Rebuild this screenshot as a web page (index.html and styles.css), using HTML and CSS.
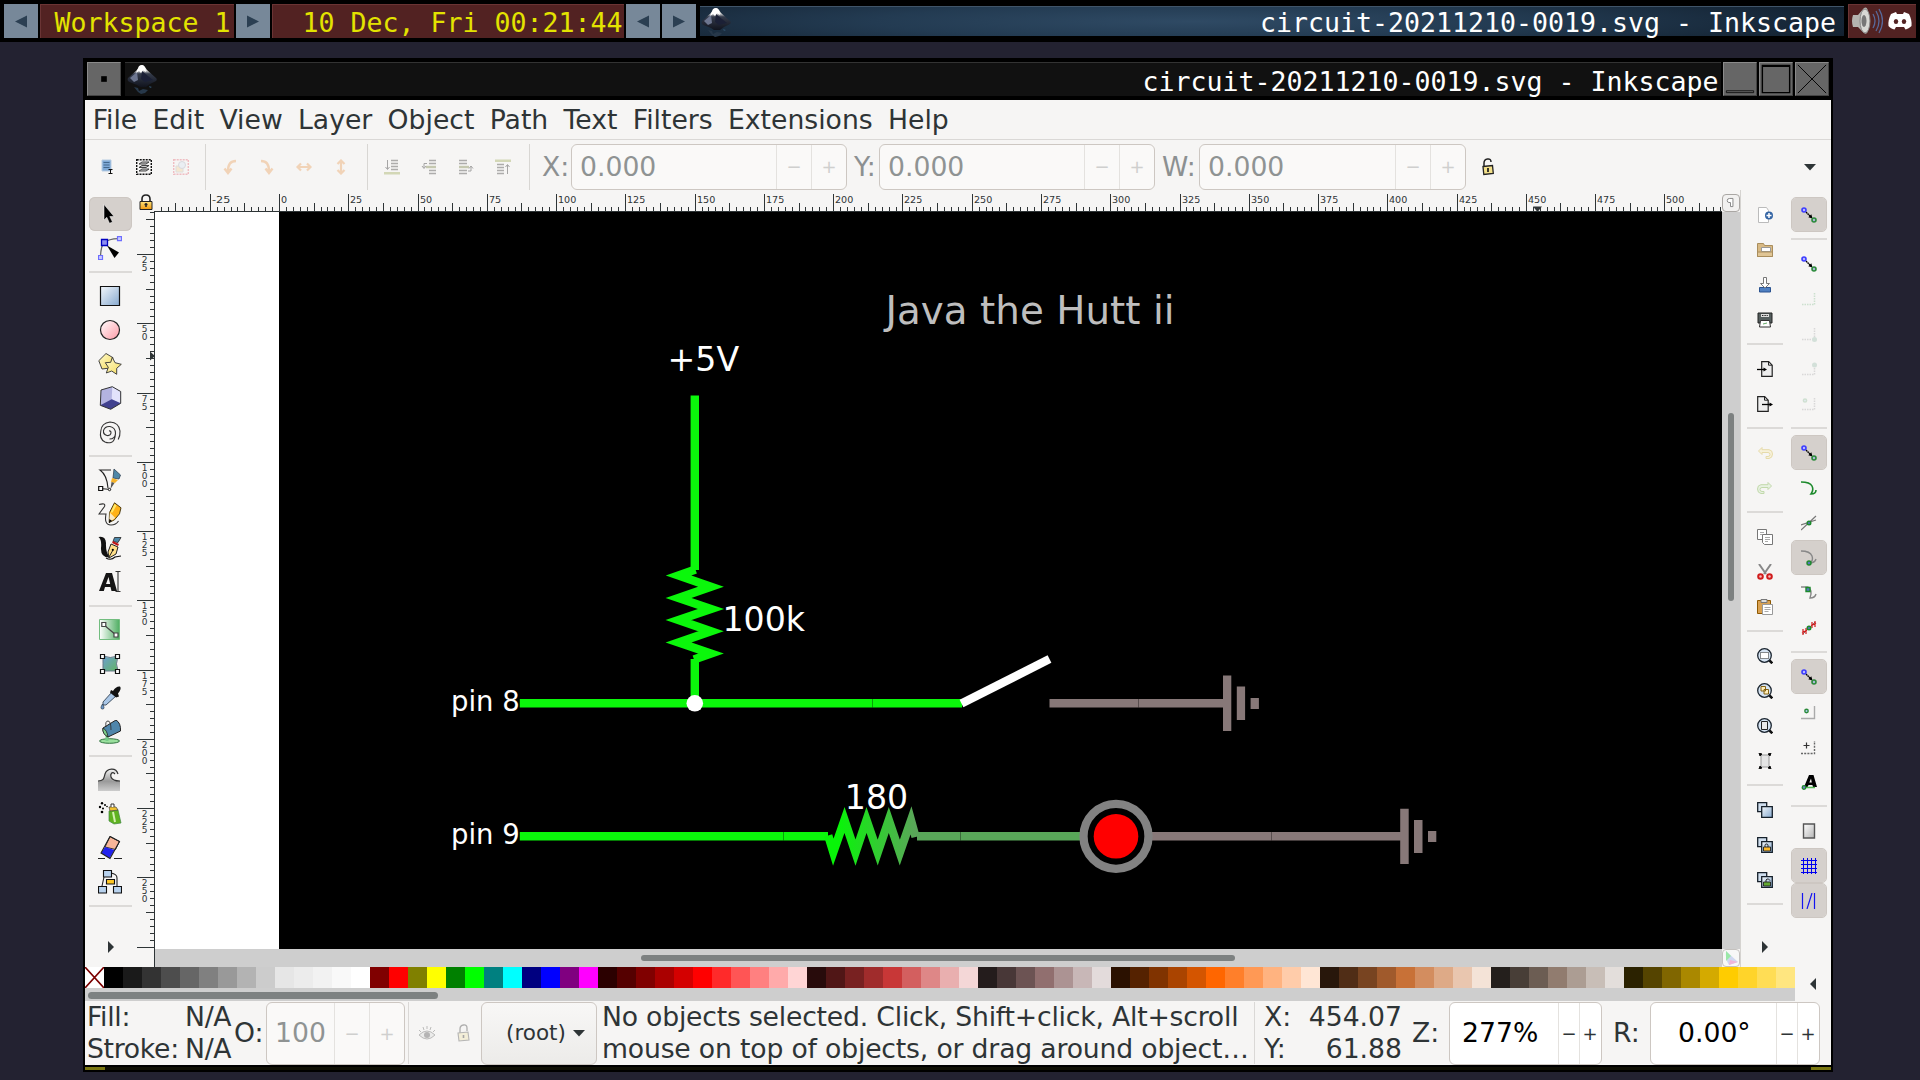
FILE: index.html
```html
<!DOCTYPE html>
<html lang="en">
<head>
<meta charset="utf-8">
<title>circuit-20211210-0019.svg - Inkscape</title>
<link rel="stylesheet" href="styles.css">
</head>
<body>
<svg width="0" height="0" class="defs" aria-hidden="true">
  <defs>
    <linearGradient id="gBlue" x1="0" y1="0" x2="1" y2="1"><stop offset="0" stop-color="#f4f8fc"/><stop offset="1" stop-color="#86a9cf"/></linearGradient>
    <linearGradient id="gPink" x1="0" y1="0" x2="1" y2="1"><stop offset="0" stop-color="#fff"/><stop offset="1" stop-color="#ff9aa6"/></linearGradient>
    <linearGradient id="gYel" x1="0" y1="0" x2="1" y2="1"><stop offset="0" stop-color="#fffbd0"/><stop offset="1" stop-color="#f5dc5c"/></linearGradient>
    <linearGradient id="gGreen" x1="0" y1="0" x2="1" y2="0"><stop offset="0" stop-color="#fff"/><stop offset="1" stop-color="#4fae62"/></linearGradient>
    <linearGradient id="gGray" x1="0" y1="0" x2="1" y2="1"><stop offset="0" stop-color="#fff"/><stop offset="1" stop-color="#b4b4b4"/></linearGradient>
    <linearGradient id="gWave" x1="0" y1="0" x2="0" y2="1"><stop offset="0" stop-color="#f4f4f4"/><stop offset=".55" stop-color="#999"/><stop offset="1" stop-color="#ccc"/></linearGradient>
    <linearGradient id="gMesh" x1="0" y1="0" x2="1" y2="1"><stop offset="0" stop-color="#6c9fd0"/><stop offset="1" stop-color="#62b562"/></linearGradient>
    <linearGradient id="gGold" x1="0" y1="0" x2="0" y2="1"><stop offset="0" stop-color="#ffe27a"/><stop offset="1" stop-color="#f09a10"/></linearGradient>
    <linearGradient id="gInk" x1="0" y1="0" x2="0" y2="1"><stop offset="0" stop-color="#fff"/><stop offset=".25" stop-color="#ddd"/><stop offset=".4" stop-color="#333a4a"/><stop offset="1" stop-color="#11141e"/></linearGradient>
    <symbol id="inkscape" viewBox="0 0 30 30">
      <path d="M15 1c-2 0-3 2-5 5L1 14c-1 2 0 4 4 5l5 2 3 2h6l4-3 6-3c1-1 1-2 0-3L20 6c-2-3-3-5-5-5z" fill="url(#gInk)"/>
      <path d="M15 7l6 5 5 4-8 2-4-3z" fill="#1b2036"/><path d="M3 14l7-6 1 8-4 2z" fill="#6d7690"/><path d="M12 2q3-2 6 1l1 5-3-2-2 3-2-2-3 2z" fill="#fff"/><path d="M7 23l4 1 1 3 4-2 5 1-3 3-4 1-3-2z" fill="#27384a"/><path d="M22 22l3 1-2 1z" fill="#31506b"/>
    </symbol>
    <symbol id="snap" viewBox="0 0 16 16">
      <path d="M5 5l5 5" stroke="#000" stroke-width="1.4" stroke-dasharray="1.6 .6"/><path d="M11.5 11.5l-4.2-1.2 3-3z"/>
      <circle cx="3" cy="3" r="2" fill="#b9bbff" stroke="#3c3cff" stroke-width="1.6"/><circle cx="13" cy="13" r="2" fill="#a9b9d8" stroke="#2b8a3a" stroke-width="1.6"/>
    </symbol>
    <symbol id="lens" viewBox="0 0 16 16"><path d="M12 12l3.300 3.300" stroke="#111" stroke-width="2.600"/><circle cx="7.500" cy="7.500" r="6.800" fill="#d5e3f2" stroke="#1b2530" stroke-width="1.300"/></symbol>
    <symbol id="dups" viewBox="0 0 16 16"><path d="M.7.7h9v9h-9z" fill="#cfdeee" stroke="#16202a" stroke-width="1.3"/><path d="M4.7 4.7h10.6v10.6H4.7z" fill="url(#gBlue)" stroke="#16202a" stroke-width="1.3"/></symbol>
  </defs>
</svg>

<header class="panel">
  <button class="pbtn left"><svg viewBox="0 0 34 34"><path d="M23 11.500v12L11 17.500z"/></svg></button>
  <div class="ws">Workspace 1</div>
  <button class="pbtn"><svg viewBox="0 0 34 34"><path d="M11 11.500v12L23 17.500z"/></svg></button>
  <div class="clock">10 Dec, Fri 00:21:44</div>
  <button class="pbtn"><svg viewBox="0 0 34 34"><path d="M23 11.500v12L11 17.500z"/></svg></button>
  <button class="pbtn"><svg viewBox="0 0 34 34"><path d="M11 11.500v12L23 17.500z"/></svg></button>
  <div class="task"><svg class="tico"><use href="#inkscape"/></svg><span>circuit-20211210-0019.svg - Inkscape</span></div>
  <div class="tray">
    <svg width="32" height="30" viewBox="0 0 32 30"><path d="M2 9h5l6-7q3-2 4 3 2 10 0 20-1 4-4 2l-6-6H2q-2-6 0-12z" fill="#b4b4b0"/><ellipse cx="14" cy="15" rx="5" ry="12" fill="#d8d8d4" stroke="#888" stroke-width="1"/><ellipse cx="13" cy="15" rx="2.500" ry="6" fill="#777"/><path d="M22 8q4 7 0 14M25 5q6 10 0 20M28 3q7 12 0 24" fill="none" stroke="#58699b" stroke-width="1.300"/></svg>
    <svg width="24" height="20" viewBox="0 0 24 20"><path d="M8 1l1 2h6l1-2 5 2c2 4 3 8 2.500 12-2 2-4 3-6 3.500L16 16H8l-1.500 2.500C4 18 2 17 .5 15 0 11 1 7 3 3z" fill="#fff"/><ellipse cx="8" cy="10.500" rx="2.200" ry="2.500" fill="#522222"/><ellipse cx="16" cy="10.500" rx="2.200" ry="2.500" fill="#522222"/></svg>
  </div>
</header>

<main class="window">
  <div class="titlebar">
    <button class="wbtn"><svg viewBox="0 0 34 34"><path d="M14 14h6v6h-6z" fill="#000"/></svg></button>
    <div class="title"><svg class="tico"><use href="#inkscape"/></svg><span>circuit-20211210-0019.svg - Inkscape</span></div>
    <button class="wbtn"><svg viewBox="0 0 34 34"><path d="M2.500 29.500h29v2h-29z" fill="none" stroke="#111"/></svg></button>
    <button class="wbtn"><svg viewBox="0 0 34 34"><path d="M2.500 2.500h29v29h-29zM2.500 3.500h29" fill="none" stroke="#000" stroke-width="1.500"/></svg></button>
    <button class="wbtn"><svg viewBox="0 0 34 34"><path d="M2 2l30 30M32 2L2 32" fill="none" stroke="#000"/></svg></button>
  </div>

  <nav class="menu"><span>File</span><span>Edit</span><span>View</span><span>Layer</span><span>Object</span><span>Path</span><span>Text</span><span>Filters</span><span>Extensions</span><span>Help</span></nav>

  <section class="options">
    <div class="grp g1">
      <svg class="i16" viewBox="0 0 16 16"><path d="M3 1h9v11H3z" fill="#7fa9d6" stroke="#b9cde2"/><path d="M4.500 3.500h6M4.500 6h6M4.500 8.500h6" stroke="#44698f"/><path d="M9.500 10.500h4M11.500 10.500v4M9.500 14.500h4" stroke="#111"/></svg>
      <svg class="i16" viewBox="0 0 16 16"><path d="M.7.7h14.600v14.600H.7z" fill="none" stroke="#111" stroke-width="1.400" stroke-dasharray="2 1"/><path d="M3 5l3-2h7l-3 2zM3 8.500l3-2h7l-3 2zM3 12l3-2h7l-3 2z" fill="#ccc" stroke="#333" stroke-width=".9"/></svg>
      <svg class="i16 dim" viewBox="0 0 16 16"><path d="M.7.7h14.600v14.600H.7z" fill="none" stroke="#e04050" stroke-width="1.400" stroke-dasharray="2 1"/><path d="M3 7h7v6H3z" fill="#f3c97e" stroke="#aaa"/><circle cx="9" cy="6" r="3.500" fill="#cfe0f0" stroke="#99a"/></svg>
    </div>
    <i class="vsep"></i>
    <div class="grp g2">
      <svg class="i16 dim" viewBox="0 0 16 16"><path d="M14 2Q6 2 6 12M2.500 9.500L6 14l3.500-4.500" fill="none" stroke="#e8862f" stroke-width="2.400"/></svg>
      <svg class="i16 dim" viewBox="0 0 16 16"><path d="M2 2Q10 2 10 12M6.500 9.500L10 14l3.500-4.500" fill="none" stroke="#e8862f" stroke-width="2.400"/></svg>
      <svg class="i16 dim" viewBox="0 0 16 16"><path d="M2 8h12M5 4.500L1.500 8 5 11.500M11 4.500L14.500 8 11 11.500" fill="none" stroke="#e8862f" stroke-width="2.200"/></svg>
      <svg class="i16 dim" viewBox="0 0 16 16"><path d="M8 2v12M4.500 5L8 1.500 11.500 5M4.500 11L8 14.500l3.500-3.500" fill="none" stroke="#e8862f" stroke-width="2.200"/></svg>
    </div>
    <i class="vsep"></i>
    <div class="grp g2">
      <svg class="i16 dim2" viewBox="0 0 16 16"><path d="M7 1.500h7M7 4.500h7M7 7.500h7M7 10.500h7" stroke="#555" stroke-width="1.700"/><path d="M3.500 1v9M1.500 8l2 2.500 2-2.500" stroke="#444" fill="none"/><path d="M0 13h16v2.500H0z" fill="#aab36c"/></svg>
      <svg class="i16 dim2" viewBox="0 0 16 16"><path d="M8 1.500h7M8 4.500h7M8 11.500h7M8 14.500h7" stroke="#555" stroke-width="1.700"/><path d="M5 8h10" stroke="#8a9260" stroke-width="2.400"/><path d="M6 4.500H3V9M1 7l2 2.500L5 7" stroke="#444" fill="none"/></svg>
      <svg class="i16 dim2" viewBox="0 0 16 16"><path d="M1 1.500h8M1 4.500h8M1 11.500h8M1 14.500h8" stroke="#555" stroke-width="1.700"/><path d="M1 8h10" stroke="#8a9260" stroke-width="2.400"/><path d="M10 12h3V7.500M11 9.500L13 7l2 2.500" stroke="#444" fill="none"/></svg>
      <svg class="i16 dim2" viewBox="0 0 16 16"><path d="M0 .5h16V3H0z" fill="#aab36c"/><path d="M2 5.500h7M2 8.500h7M2 11.500h7M2 14.500h7" stroke="#555" stroke-width="1.700"/><path d="M12.500 6v9M10.500 8l2-2.500 2 2.500" stroke="#444" fill="none"/></svg>
    </div>
    <i class="vsep"></i>
    <label class="lx">X:</label><div class="spin"><span>0.000</span><b>−</b><b>+</b></div>
    <label class="ly">Y:</label><div class="spin"><span>0.000</span><b>−</b><b>+</b></div>
    <label class="lw">W:</label><div class="spin sw"><span>0.000</span><b>−</b><b>+</b></div>
    <svg class="lockw" viewBox="0 0 16 18"><path d="M4 9V5q0-3.500 3.500-4T11 4" fill="none" stroke="#222" stroke-width="1.500"/><path d="M3 8.500l9.500-1 .8 8-9.500 1z" fill="#f3e08a" stroke="#222" stroke-width="1.300"/><path d="M8 10v4" stroke="#222" stroke-width="1.800"/></svg>
    <svg class="drop" viewBox="0 0 12 7"><path d="M0 0h12L6 6.500z"/></svg>
  </section>

  <section class="work">
    <aside class="toolbox">
      <div class="tb on"><svg viewBox="0 0 24 24"><path d="M6 2.500V18l2.800-2.700 2.700 6 3-1.300-2.700-5.500H16z" fill="#000" stroke="#fff" stroke-width=".5"/></svg></div>
      <div class="tb"><svg viewBox="0 0 24 24"><path d="M2.500 20Q3 10 6 6.500 11 3 20 2.700" fill="none" stroke="#666" stroke-width="1.300"/><path d="M.5 19.500h4v4h-4zM19.500.700h4v4h-4z" fill="#c9cbff" stroke="#6d6dff" stroke-width="1.200"/><path d="M3.500 3.500h6v6h-6z" fill="#8e8ef0" stroke="#0000c0" stroke-width="1.300"/><path d="M9 9.500l12 7-4.500 5.500z"/></svg></div>
      <hr>
      <div class="tb"><svg viewBox="0 0 24 24"><path d="M2.500 2.500h19v19h-19z" fill="url(#gBlue)" stroke="#111" stroke-width="1.200"/></svg></div>
      <div class="tb"><svg viewBox="0 0 24 24"><circle cx="12" cy="12" r="9.500" fill="url(#gPink)" stroke="#222" stroke-width="1.200"/></svg></div>
      <div class="tb"><svg viewBox="0 0 24 24"><g fill="url(#gYel)" stroke="#333" stroke-width=".9"><path d="M8 1.500l7 4.200L12 16l-8 1L.8 8.700z"/><path d="M14.300 5.300l2.700 5.400 6.300 1.600-4.600 4v6l-5-3.300-5.400 2 2-5.700-3-4.600 5.400-.4z"/></g></svg></div>
      <div class="tb"><svg viewBox="0 0 24 24"><path d="M14.300.700l8.400 4.800v11.800l-10 6L2.300 19.300 3 4z" fill="#b3b3e0"/><path d="M14.300.700l8.400 4.800v11.800l-9-4z" fill="#e2e2fb"/><path d="M2.300 19.300l11.400-6 9 4-10 6z" fill="#41418f"/><path d="M14.300.700l8.400 4.800v11.800l-10 6L2.300 19.300 3 4z" fill="none" stroke="#333" stroke-width="1"/></svg></div>
      <div class="tb"><svg viewBox="0 0 24 24"><path d="M11 11q2-.5 2 2-.5 3-4 2.500-4-1-3.500-5Q7 6 12 6.500q5.500 1 5.500 7Q17 19 11.500 19M2.800 11Q3.500 3 12 2q9 .5 10 9 .3 5-1.800 8.500M2.800 11Q1 19 7 22q3 1.300 6 .5 4-1 4.500-9" fill="none" stroke="#333" stroke-width="1.100"/></svg></div>
      <hr>
      <div class="tb"><svg viewBox="0 0 24 24"><path d="M13 2H2q7 5 8 18M2 20.500l11 1" fill="none" stroke="#222" stroke-width="1.100"/><path d="M.700 18.500h4v4h-4z" fill="#fff" stroke="#111" stroke-width="1.200"/><circle cx="11.500" cy="21.500" r="1.200" fill="#fff" stroke="#111"/><path d="M16 1l6.500 6-1.500 4-6-1z" fill="#4d87a8" stroke="#345" stroke-width=".8"/><path d="M14 10l6 2-3 3-4-1z" fill="#f5b32a"/><path d="M13.500 14l3 1-4 6z" fill="#555"/></svg></div>
      <div class="tb"><svg viewBox="0 0 24 24"><path d="M1 2.500q7-2 5.500 2L1 12h7c-1 5-1 11 5 11q5 0 7.500-4" fill="none" stroke="#333" stroke-width="1.100"/><path d="M16.500.800l6.500 5-1.500 6-5 6-5.300 2.700.300-10z" fill="#ffb217" stroke="#3b2c05" stroke-width=".9"/><path d="M16.500 2l2 1.500-4 7-2 0z" fill="#ffe96a"/><path d="M11.800 10.500l5.500 5.500-6 4.300z" fill="#fbe9c2"/><path d="M11.300 17l2.700 1.700-3 2.300z"/></svg></div>
      <div class="tb"><svg viewBox="0 0 24 24"><path d="M.5 1q7-1.500 7.500 6-.500 10 4 14.500Q2.500 22 3 12 4 4 .5 1z" fill="#111"/><path d="M8 22q5 3 9-1l6-1" fill="none" stroke="#111" stroke-width="1.100"/><path d="M16.500 1.500h6.500l-3 5-5-1z" fill="#4d87a8" stroke="#222" stroke-width=".8"/><path d="M14.500 6l6 3" stroke="#c01616" stroke-width="2"/><path d="M13 8l7 3-2 7-7 4-1-6z" fill="#ffe08a" stroke="#222" stroke-width="1"/><path d="M11 21l4-7" stroke="#222"/><circle cx="14.800" cy="13.800" r="1.100"/></svg></div>
      <div class="tb"><svg viewBox="0 0 24 24"><path d="M1 21L8 3h6l5 18h-5.500l-1-4H7l-1.200 4zM8 14h4.200L10.500 7z" fill="#151515"/><path d="M17.500 1.500h5M20 1.500v20M17.500 21.500h5" stroke="#333" stroke-width="1.100"/></svg></div>
      <hr>
      <div class="tb"><svg viewBox="0 0 24 24"><path d="M1.500 1.500h20v20h-20z" fill="url(#gGreen)" stroke="#72bd7f" stroke-width="1"/><path d="M6 7l12 10" stroke="#444" stroke-width="1.200"/><path d="M3.800 4.500h4v4h-4zM16 15h4v4h-4z" fill="#fff" stroke="#444" stroke-width="1.200"/></svg></div>
      <div class="tb"><svg viewBox="0 0 24 24"><path d="M5 4q7 3 15 0-3 8 0 15-8 0-15 0 0-8 0-15z" fill="url(#gMesh)" stroke="#678" stroke-width="1"/><g fill="#fff" stroke="#111" stroke-width="1.200"><path d="M2.500 2.500h4v4h-4zM17.500 2.500h4v4h-4zM2.500 17.500h4v4h-4zM17.500 17.500h4v4h-4z"/></g></svg></div>
      <div class="tb"><svg viewBox="0 0 24 24"><path d="M14 6l4 4L8 19H5v-3z" fill="#a9c6e6" stroke="#345" stroke-width=".9"/><path d="M13 4l2 1q3-5 7-4.500 2 2-2 7l1 3-3 1-6-5z" fill="#111"/><path d="M4.500 18q-3 5 0 5t0-5z" fill="#6f9bd0" stroke="#234" stroke-width=".7"/></svg></div>
      <div class="tb"><svg viewBox="0 0 24 24"><ellipse cx="11.500" cy="21" rx="10" ry="2.300" fill="#9adf9d" stroke="#263" stroke-width=".9"/><path d="M9 15v6" stroke="#7c8" stroke-width="3"/><path d="M5 8L18 0q5 3 4.500 11L10 17Q4 13 5 8z" fill="#4f86ab" stroke="#222" stroke-width="1"/><path d="M5 8q4 2 5 9-6-3-5-9z" fill="#7dce8b" stroke="#222" stroke-width=".8"/><path d="M8 7q-1-6 2-6t3 9" fill="none" stroke="#333" stroke-width=".9"/></svg></div>
      <hr>
      <div class="tb"><svg viewBox="0 0 24 24"><path d="M0 13c6 0 6-3 7-7 2-6 12-7 12 0-2-3-6-1-6 3s3 4 9 4v10H0z" fill="url(#gWave)"/><path d="M0 13c6 0 6-3 7-7 2-6 11-7 13 0M17 6c-3-3-5 0-4 3s4 4 9 4" fill="none" stroke="#333" stroke-width="1.200"/></svg></div>
      <div class="tb"><svg viewBox="0 0 24 24"><path d="M11 9l9-1 3 13-7 1-5-3z" fill="#5fb21f" stroke="#484" stroke-width=".7"/><path d="M15 10l2 10" stroke="#d4f0b0" stroke-width="2"/><path d="M11 5h7l2 3-8 1z" fill="#f2c230" stroke="#444" stroke-width=".7"/><path d="M13 5V2h3v3" fill="#fff" stroke="#333"/><g><circle cx="4" cy="1.200" r="1.200"/><circle cx="2" cy="5" r="1.200"/><circle cx="7" cy="3" r="1"/><circle cx="5" cy="6.500" r="1"/><circle cx="4" cy="10" r="1.300"/><circle cx="9" cy="4.500" r=".8"/></g></svg></div>
      <div class="tb"><svg viewBox="0 0 24 24"><path d="M12 .500l9.500 5-4 8L7 11z" fill="#f7b598" stroke="#333"/><path d="M7 11l9.500 3-5 8.500L3 17z" fill="#2222ee"/><path d="M12 .500l9.500 5-9.500 17L3 17z" fill="none" stroke="#222" stroke-width="1.100"/><path d="M0 22.500h7M16 22.500h8" stroke="#222" stroke-width="1.200"/></svg></div>
      <div class="tb"><svg viewBox="0 0 24 24"><path d="M6 7L4 16M13 3q6 1 6 5v8" fill="none" stroke="#222" stroke-width="1.100"/><g stroke="#111" stroke-width="1.100"><path d="M5.500.500h8v6.500h-8zM.5 16.500h8V23h-8zM15.500 16.500h8V23h-8z" fill="#b8d2ee"/><path d="M8.500 9.500h8V14h-8z" fill="#ffc826"/></g></svg></div>
      <hr>
      <svg class="more" viewBox="0 0 6 12"><path d="M0 0l6 6-6 6z"/></svg>
    </aside>

    <div class="vcol">
      <div class="guide"><svg viewBox="0 0 16 17"><path d="M4 8V5q0-4 4-4t4 4v3" fill="none" stroke="#222" stroke-width="1.600"/><path d="M2 7.500h12v8H2z" fill="url(#gGold)" stroke="#222"/><path d="M8 9v4M6.500 10.500h3" stroke="#222" stroke-width="1.500"/></svg></div>
      <svg class="vruler" id="vruler" width="18" height="756"></svg>
    </div>

    <div class="canvascol">
      <svg class="hruler" id="hruler" width="1567" height="18"></svg>
      <svg class="canvas" width="1567" height="737" viewBox="155 212 1567 737">
        <defs><linearGradient id="gRes" gradientUnits="userSpaceOnUse" x1="838" y1="0" x2="915" y2="0"><stop offset="0" stop-color="#08f508"/><stop offset="1" stop-color="#5aa659"/></linearGradient></defs>
        <rect x="155" y="212" width="124" height="737" fill="#fff"/>
        <rect x="279" y="212" width="1443" height="737"/>
        <g fill="none" stroke="#0bf70b" stroke-width="8.400">
          <path d="M694.800 395.500V570M694.800 659V703M519.800 703.300H962M519.800 836.300H828"/>
          <path d="M695.500 569.500L678.500 575.500 711 586.700 678.500 598 711 609 678.500 620 711 631.200 678.500 642.500 711 653.500 694 659.500" stroke-miterlimit="8"/>
          <path d="M828.200 835.500L833.300 852.200 844.500 820 855.500 852.600 866.500 820 877.700 852.600 888.800 820 899.800 852.600 911 820.300 915.600 837" stroke="url(#gRes)" stroke-miterlimit="8"/>
          <path d="M917 836.300H1083" stroke="#59a659"/>
          <path d="M961.500 703.500L1049.500 659" stroke="#fff"/>
          <path d="M1049.500 703.300H1224M1152 836.300H1401" stroke="#877878"/>
        </g>
        <path d="M872.500 699v8.500M783.500 832v8.500M960.500 832v8.500M1138.500 699v8.500M1271.500 832v8.500" stroke="#000" stroke-opacity=".35"/>
        <path d="M1223 675.500h8.300v55.500h-8.300zM1236.800 686.500h8.300V720h-8.300zM1250.600 698h8.300v11h-8.300zM1400.200 808.800h8.500V864h-8.500zM1414 820h8.500v33H1414zM1428 831h8.300v11H1428z" fill="#877878"/>
        <circle cx="694.800" cy="703.300" r="8.300" fill="#fff"/>
        <circle cx="1116" cy="836.300" r="32.500" fill="#000" stroke="#828282" stroke-width="8.300"/><circle cx="1116" cy="836.300" r="22.300" fill="#f00"/>
        <g fill="#fff" class="label">
          <text x="885.500" y="323.700" font-size="38.800" fill="#bebebe" textLength="289">Java the Hutt ii</text>
          <text x="667.500" y="371" font-size="33.200">+5V</text>
          <text x="722.500" y="631" font-size="33.200">100k</text>
          <text x="844.800" y="809" font-size="33.200">180</text>
          <text x="451" y="710.500" font-size="27.500">pin 8</text>
          <text x="451" y="843.500" font-size="27.500">pin 9</text>
        </g>
      </svg>
      <div class="hscroll"><i></i></div>
    </div>

    <div class="scrollcol">
      <div class="sticky"><svg viewBox="0 0 14 16"><path d="M5 8Q3 8 3 5.500T6 3h4v10H7V8z" fill="#fff" stroke="#888" stroke-width="1.200"/></svg></div>
      <div class="vscroll"><i></i></div>
      <div class="cms"><svg viewBox="0 0 16 16"><path d="M3 1l12 11-9 3q-4-6-3-14z" fill="#cfd8f0"/><path d="M3 1l5 5-5 5z" fill="#9be8a8"/><path d="M15 12l-9 3 1-5z" fill="#f0b6d8"/></svg></div>
    </div>

    <aside class="cmds">
      <div class="cb"><svg viewBox="0 0 16 16"><path d="M1.500.500h8l2 3v12h-10z" fill="#fff" stroke="#bbb"/><circle cx="12" cy="8.500" r="4" fill="#3465a4"/><path d="M9.500 8.500h5M12 6v5" stroke="#fff" stroke-width="1.500"/></svg></div>
      <div class="cb"><svg viewBox="0 0 16 16"><path d="M.500 1.500h6l1 2h8v11h-15z" fill="#d8b984" stroke="#a98d5c"/><path d="M4.500 5.500h9v4h-9z" fill="#fff" stroke="#999"/><path d="M.500 10h15v4.500h-15z" fill="#e0c595" stroke="#a98d5c"/></svg></div>
      <div class="cb"><svg viewBox="0 0 16 16"><path d="M2.500 10.500h11v4.500h-11z" fill="#4f7fc0" stroke="#2b5390"/><path d="M6.500.500h3v6h3L8 11 3.500 6.500h3z" fill="#fff" stroke="#777"/></svg></div>
      <div class="cb"><svg viewBox="0 0 16 16"><path d="M1 1h14v10H1z" fill="#555e5e" stroke="#222"/><path d="M4 2h8v3H4z" fill="#ddd"/><path d="M5 3.500h6" stroke="#222" stroke-dasharray="1 .6"/><path d="M3.500 8.500h9l1 6.500h-11z" fill="#fff" stroke="#333"/><path d="M6 12l4-1" stroke="#6a6"/></svg></div>
      <hr>
      <div class="cb"><svg viewBox="0 0 16 16"><path d="M4.700.700h7l3.500 3.500v11.100H4.700z" fill="#eee" stroke="#222" stroke-width="1.200"/><path d="M11.500.700v3.500h3.500" fill="none" stroke="#222"/><path d="M0 8.500h7" stroke="#000" stroke-width="1.300"/><path d="M10 8.500L6.500 6.500v4z"/></svg></div>
      <div class="cb"><svg viewBox="0 0 16 16"><path d="M.700.700h7l3.500 3.500v11.100H.700z" fill="#eee" stroke="#222" stroke-width="1.200"/><path d="M7.500.700v3.500H11" fill="none" stroke="#222"/><path d="M5 8.500h8" stroke="#000" stroke-width="1.300"/><path d="M16 8.500l-3.500-2v4z"/></svg></div>
      <hr>
      <div class="cb dim"><svg viewBox="0 0 16 16"><path d="M5 2.500L1.500 6 5 9.500V7.500h6q2 0 2 2t-2 2H9v2h3q3.500-.5 3.500-4.500T12 4.700H5z" fill="#fbe9a0" stroke="#c4a000"/></svg></div>
      <div class="cb dim"><svg viewBox="0 0 16 16"><path d="M11 2.500L14.500 6 11 9.500V7.500H5q-2 0-2 2t2 2h2v2H4Q.500 13 .500 9T4 4.700h7z" fill="#c5e8b8" stroke="#4e9a06"/></svg></div>
      <hr>
      <div class="cb"><svg viewBox="0 0 16 16"><g fill="#fff" stroke="#777"><path d="M.500.500h9v10h-9z"/><path d="M5.500 5.500h10v10h-8l-2-2z"/></g><path d="M3 3.500h4M3 5.500h2M8 8.500h5M8 10.500h5M8 12.500h3" stroke="#aaa"/></svg></div>
      <div class="cb"><svg viewBox="0 0 16 16"><path d="M2 0l7 10M14 0L7 10" stroke="#888" stroke-width="2"/><circle cx="3.500" cy="12.500" r="2.300" fill="#f6c0c0" stroke="#d01c1c" stroke-width="2"/><circle cx="12.500" cy="12.500" r="2.300" fill="#f6c0c0" stroke="#d01c1c" stroke-width="2"/></svg></div>
      <div class="cb"><svg viewBox="0 0 16 16"><path d="M.500 1.500h13v13H.500z" fill="#d9a151" stroke="#8f5902"/><path d="M4 .500h6v3H4z" fill="#ddd" stroke="#777"/><path d="M5.500 5.500h10v10h-10z" fill="#fff" stroke="#999"/><path d="M7.500 8.500h6M7.500 10.500h6M7.500 12.500h4" stroke="#aaa"/></svg></div>
      <hr>
      <div class="cb"><svg viewBox="0 0 16 16"><use href="#lens"/><path d="M3.500 4.500h8v6h-8z" fill="#fff" stroke="#222" stroke-dasharray="1 1"/></svg></div>
      <div class="cb"><svg viewBox="0 0 16 16"><use href="#lens"/><path d="M4 3.500h4.500V8H4zM7 6.500h4.500V11H7z" fill="#ffeebb" stroke="#7a5500" stroke-width=".9"/></svg></div>
      <div class="cb"><svg viewBox="0 0 16 16"><use href="#lens"/><path d="M4.500 3.500h6v8h-6z" fill="#e8e8e8" stroke="#222"/></svg></div>
      <div class="cb"><svg viewBox="0 0 16 16"><path d="M4 2h8v12H4z" fill="#e5e5e5" stroke="#999"/><path d="M2 0l3 1-2 2zM14 0l-3 1 2 2zM2 16l3-1-2-2zM14 16l-3-1 2-2z" stroke="#111" stroke-width="1"/></svg></div>
      <hr>
      <div class="cb"><svg viewBox="0 0 16 16"><use href="#dups"/></svg></div>
      <div class="cb"><svg viewBox="0 0 16 16"><use href="#dups"/><path d="M8 10V8.500q0-1.500 1.500-1.500T11 8.500V10" fill="none" stroke="#222"/><path d="M6.500 10h7v4h-7z" fill="#fbb829" stroke="#222" stroke-width=".9"/></svg></div>
      <div class="cb"><svg viewBox="0 0 16 16"><use href="#dups"/><path d="M9 10V8q1-1.500 2.500-.8t1.500 1.300" fill="none" stroke="#222"/><path d="M6.500 10h7v4h-7z" fill="#62a832" stroke="#222" stroke-width=".9"/></svg></div>
      <hr>
      <svg class="more" viewBox="0 0 6 12"><path d="M0 0l6 6-6 6z"/></svg>
    </aside>

    <aside class="snaps">
      <div class="sb on"><svg><use href="#snap"/></svg></div>
      <hr>
      <div class="sb"><svg><use href="#snap"/></svg></div>
      <div class="sb off"><svg viewBox="0 0 16 16"><path d="M1 13.500h12.500V1" fill="none" stroke="#3a9a4c" stroke-width="1.500" stroke-dasharray="1.500 1"/></svg></div>
      <div class="sb off"><svg viewBox="0 0 16 16"><path d="M1 13.500h12.500V1" fill="none" stroke="#777" stroke-width="1.500" stroke-dasharray="1.500 1"/><circle cx="13.500" cy="13.500" r="2.500" fill="#5a9a7c"/></svg></div>
      <div class="sb off"><svg viewBox="0 0 16 16"><path d="M1 13.500h12.500V1" fill="none" stroke="#777" stroke-width="1.500" stroke-dasharray="1.500 1"/><circle cx="13.500" cy="4" r="2.500" fill="#5a9a7c"/></svg></div>
      <div class="sb off"><svg viewBox="0 0 16 16"><path d="M1 13.500h12.500V1" fill="none" stroke="#777" stroke-width="1.500" stroke-dasharray="1.500 1"/><circle cx="4" cy="4.500" r="1.600" fill="#ace" stroke="#4b9a5a" stroke-width="1.500"/></svg></div>
      <hr>
      <div class="sb on"><svg><use href="#snap"/></svg></div>
      <div class="sb"><svg viewBox="0 0 16 16"><path d="M0 2q9 0 11 4t-1 8q5 0 5-4" fill="none" stroke="#1d8a2c" stroke-width="1.600"/></svg></div>
      <div class="sb"><svg viewBox="0 0 16 16"><path d="M0 15L15 1M0 10l15-5" stroke="#777" stroke-width="1.200"/><circle cx="8" cy="8" r="1.800" fill="#57b" stroke="#1d8a2c" stroke-width="1.400"/></svg></div>
      <div class="sb on"><svg viewBox="0 0 16 16"><path d="M0 1q9 0 11 5t-3 7q6 0 7-4" fill="none" stroke="#888" stroke-width="1.400"/><circle cx="8" cy="13" r="2" fill="#57b" stroke="#1d8a2c" stroke-width="1.400"/></svg></div>
      <div class="sb"><svg viewBox="0 0 16 16"><path d="M0 2h7q5 3 2 11 5 0 6-4" fill="none" stroke="#888" stroke-width="1.400"/><path d="M5 2.500h4v4H5z" fill="#57b" stroke="#1d8a2c" stroke-width="1.400"/></svg></div>
      <div class="sb"><svg viewBox="0 0 16 16"><path d="M2 14L14 2" stroke="#777"/><path d="M2 9v6M5 8v6M1 13l5-3M11 2v6M14 1v6M10 6l5-3" stroke="#d01c1c" stroke-width="1.200"/><circle cx="8" cy="8" r="1.800" fill="#57b" stroke="#1d8a2c" stroke-width="1.400"/></svg></div>
      <hr>
      <div class="sb on"><svg><use href="#snap"/></svg></div>
      <div class="sb"><svg viewBox="0 0 16 16"><path d="M0 14.500h13.500V2" fill="none" stroke="#aaa" stroke-width="1.400"/><circle cx="5.500" cy="7" r="1.700" fill="#ace" stroke="#2b8a3a" stroke-width="1.400"/></svg></div>
      <div class="sb"><svg viewBox="0 0 16 16"><path d="M0 14.500h13.500V2" fill="none" stroke="#666" stroke-width="1.400" stroke-dasharray="2 1.200"/><path d="M5.500 3.500v6M2.500 6.500h6" stroke="#333" stroke-width="1.200"/></svg></div>
      <div class="sb"><svg viewBox="0 0 16 16"><path d="M3 13L8 1h4.500L16 13h-4l-.6-2H7.500L6.500 13zM8.300 8.500h2.500L10 4.500z"/><path d="M3 13.500h11" stroke="#5b5" stroke-width="1.500"/><circle cx="3" cy="13.500" r="1.800" fill="#77c" stroke="#1d8a2c" stroke-width="1.300"/></svg></div>
      <hr>
      <div class="sb"><svg viewBox="0 0 16 16"><path d="M2.500 1h11v14h-11z" fill="url(#gGray)" stroke="#555" stroke-width="1.400"/></svg></div>
      <div class="sb on"><svg viewBox="0 0 16 16"><path d="M0 2.500h16M0 6.500h16M0 10.500h16M0 14.500h16M2.500 0v16M6.500 0v16M10.500 0v16M14.500 0v16" stroke="#0000f0" stroke-width="1"/></svg></div>
      <div class="sb on"><svg viewBox="0 0 16 16"><path d="M1.500 0v16M13.500 0v16M6 16L11 0" stroke="#1414f0" stroke-width="1.200"/></svg></div>
    </aside>
  </section>

  <section class="palrow">
    <div class="palette">
      <div class="swatches" id="swatches"><svg class="none" width="19" height="21" viewBox="0 0 19 21"><path d="M0 0l19 21M19 0L0 21" stroke="#7b0000" stroke-width="1.600"/></svg></div>
      <div class="palscroll"><i></i></div>
    </div>
    <svg class="palmore" viewBox="0 0 6 12"><path d="M6 0L0 6l6 6z"/></svg>
  </section>

  <footer class="status">
    <div class="fs"><span>Fill:</span><span>N/A</span><span>Stroke:</span><span>N/A</span></div>
    <label class="lo">O:</label>
    <div class="spin so"><span>100</span><b>−</b><b>+</b></div>
    <i class="vs1"></i>
    <svg class="eye" viewBox="0 0 18 16"><path d="M1 10q8-8 16 0-8 8-16 0z" fill="#ddd" stroke="#666"/><circle cx="9" cy="10" r="3" fill="#555"/><path d="M1 5l2 2M5 2l1 3M9 1v3M13 2l-1 3M17 5l-2 2" stroke="#666"/></svg>
    <svg class="lk" viewBox="0 0 16 18"><path d="M4 9V5q0-3.500 3.500-4T11 4v3" fill="none" stroke="#444" stroke-width="1.300"/><path d="M2 9l10-1 1 8-10 1z" fill="#f0e4b0" stroke="#555" stroke-width="1.100"/><path d="M7.500 11v3" stroke="#333" stroke-width="1.600"/></svg>
    <div class="layer"><span>(root)</span><svg viewBox="0 0 12 7"><path d="M0 0h12L6 6.500z"/></svg></div>
    <div class="msg"><span>No objects selected. Click, Shift+click, Alt+scroll</span><span class="l2">mouse on top of objects, or drag around object…</span></div>
    <i class="vs2"></i>
    <div class="xy"><span>X:</span><span>454.07</span><span>Y:</span><span>61.88</span></div>
    <label class="lz">Z:</label>
    <div class="spin live sz"><span>277%</span><b>−</b><b>+</b></div>
    <label class="lr">R:</label>
    <div class="spin live sr"><span>0.00°</span><b>−</b><b>+</b></div>
  </footer>
  <div class="grip"><i></i><i></i></div>
</main>
<script src="app.js"></script>
</body>
</html>
```
FILE: styles.css
```css
* { box-sizing: border-box; }
body { margin: 0; width: 1920px; height: 1080px; overflow: hidden; background: #232231; font: 26.67px/32px "DejaVu Sans", sans-serif; color: #2e3436; }
svg { display: block; flex: none; }
i { display: block; flex: none; }
button { border: 0; padding: 0; display: block; flex: none; }
hr { border: 0; border-top: 2px solid #dcdad8; margin: 6px 0; height: 2px; flex: none; }
.defs { position: absolute; }

/* desktop panel */
.panel { height: 42px; background: #000; display: flex; gap: 2px; padding: 4px 4px 4px 4px; font: 26.58px/34px "DejaVu Sans Mono", monospace; white-space: pre; }
.pbtn { width: 34px; height: 34px; background: #778899; }
.pbtn path { fill: #2b3f52; }
.ws, .clock { background: #522222; color: #e3e300; height: 34px; line-height: 30px; padding-top: 4px; text-align: right; box-shadow: inset 1px 1px #6a3434; }
.ws { width: 194px; padding-right: 3.5px; }
.clock { width: 352px; padding-right: 1.5px; }
.task { flex: none; width: 1144px; margin: 2px 2px 2px 2px; height: 30px; padding: 0 8px 0 1px; display: flex; justify-content: space-between; color: #fff; line-height: 32px; background: radial-gradient(ellipse 62% 130% at 43% 50%, #2f4a64 0%, #233b52 45%, #12202f 100%); border-top: 1px solid #405468; }
.tico { width: 30px; height: 30px; }
.tray { width: 68px; height: 34px; background: #522222; display: flex; align-items: center; gap: 5px; padding-left: 3px; box-shadow: inset 1px 1px #6a3434; }

/* window */
.window { margin: 16px 0 0 83px; width: 1750px; height: 1014px; border: 2px solid #000; border-top-width: 4px; background: #f6f5f4; }
.titlebar { height: 38px; background: #000; display: flex; gap: 2px; padding: 0 2px 4px 2px; }
.wbtn { width: 34px; height: 34px; background: #666; border: 1px solid #8a8a8a; border-right-color: #444; border-bottom-color: #444; }
.title { flex: 1; margin-left: 2px; background: #111; border-top: 1px solid #333; display: flex; justify-content: space-between; padding: 1px 2.5px 0 2px; color: #fff; font: 26.58px/36px "DejaVu Sans Mono", monospace; height: 34px; }
.menu { height: 40px; border-bottom: 1px solid #dad8d6; display: flex; padding: 3px 0 0 0; line-height: 33px; }
.menu span { padding: 0 7.65px; }

/* tool options */
.options { height: 50px; display: flex; align-items: center; padding-top: 4px; color: #8c9091; }
.grp { display: flex; }
.g1 { gap: 21px; margin: 0 16px 0 14px; }
.g2 { gap: 21px; margin: 0 18px 0 16px; }
.g1, .g2 { height: 17px; }
.i16 { width: 16px; height: 16px; }
.dim { opacity: .3; }
.off { opacity: .22; }
.dim2 { opacity: .45; }
.vsep { width: 1px; height: 46px; background: #d8d6d3; }
.spin { display: flex; flex: none; width: 276px; height: 46px; border: 1px solid #cdc7c2; border-radius: 6px; background: #faf9f8; color: #8f9393; align-items: center; }
.spin span { flex: 1; padding-left: 8px; }
.spin b { width: 35px; height: 100%; border-left: 1px solid #e4e2df; font: 18px/44px "DejaVu Sans", sans-serif; text-align: center; color: #cfcfce; flex: none; }
.options label { flex: none; }
.lx { width: 28px; margin: 0 1px 0 12px; }
.ly { width: 24px; margin: 0 1px 0 7px; }
.lw { width: 37px; margin: 0 0 0 7px; }
.spin.sw { width: 267px; }
.lockw { width: 16px; height: 18px; margin-left: 14px; }
.drop { width: 12px; height: 7px; margin: 0 15px 0 auto; fill: #2e3436; }

/* working area */
.work { display: flex; height: 777px; }
.toolbox { width: 52px; padding: 7px 5px 0 4px; display: flex; flex-direction: column; }
.tb { height: 34px; flex: none; display: flex; align-items: center; justify-content: center; border-radius: 6px; }
.tb svg { width: 24px; height: 24px; margin-right: 1px; }
.tb.on { background: #d5d0cc; box-shadow: inset 0 0 0 1px #cdc7c2; }
.more { width: 6px; height: 12px; margin: 28px 0 0 19px; fill: #2e3436; }
.vcol { width: 18px; }
.guide { height: 21px; padding: 4px 0 0 1px; }
.guide svg { width: 16px; height: 17px; }
.canvascol { width: 1567px; }
.hruler { margin-top: 4px; }
.hruler text { font: 9.5px "DejaVu Sans", sans-serif; fill: #2e3436; }
.vruler text { font: 9px "DejaVu Sans", sans-serif; fill: #2e3436; }
.label text { font-family: "DejaVu Sans", sans-serif; }
.hscroll { height: 18px; background: #cecece; padding: 6px 0 0 486px; }
.hscroll i { width: 594px; height: 6px; border-radius: 3px; background: #7d8181; }
.scrollcol { width: 19px; border-right: 1px solid #d5d3d0; }
.sticky { height: 18px; width: 18px; margin-top: 4px; border: 1.5px solid #aaa7a4; border-radius: 4px; background: #f2f1f0; padding: 1px; }
.sticky svg { width: 13px; height: 13px; }
.vscroll { height: 737px; background: #cecece; padding: 201px 0 0 6px; }
.vscroll i { width: 6px; height: 188px; border-radius: 3px; background: #7d8181; }
.cms { height: 18px; width: 18px; border: 1px solid #c5c2bf; border-radius: 4px; background: #f8f8f7; }
.cms svg { width: 16px; height: 16px; }
.cmds { width: 48px; padding: 7px 6px 0 6px; }
.cb, .sb { height: 35px; display: flex; align-items: center; justify-content: center; }
.cb svg, .sb svg { width: 16px; height: 16px; }
.cmds .more { margin: 36px 0 0 15px; }
.snaps { width: 42px; padding: 7px 4px 0 2px; }
.sb { border-radius: 5px; }
.sb.on { background: #d5d0cc; border: 1px solid #cdc7c2; background-clip: padding-box; }

/* palette */
.palrow { display: flex; height: 34px; }
.palette { width: 1710px; background: #cecece; }
.swatches { display: flex; height: 21px; }
.swatches i { width: 19px; height: 21px; }
.none { background: #fff; }
.palscroll { padding: 4px 0 0 3px; }
.palscroll i { width: 350px; height: 7px; border-radius: 4px; background: #7d8181; }
.palmore { width: 6px; height: 12px; margin: 11px 0 0 15px; fill: #2e3436; }

/* status bar */
.status { display: flex; height: 64px; align-items: center; white-space: nowrap; }
.status > * { flex: none; }
.fs { display: grid; grid-template-columns: 98px 50px; line-height: 32px; height: 64px; padding: 0 0 0 2px; width: 149px; letter-spacing: -.3px; }
.lo { width: 32px; }
.spin.so, .spin.live { height: 63px; }
.spin.so b, .spin.live b { line-height: 61px; }
.spin.so { width: 139px; }
.vs1 { width: 1px; height: 62px; background: #dad8d6; margin-left: 3px; }
.eye { width: 18px; height: 16px; margin: 0 0 0 9px; opacity: .4; }
.lk { width: 16px; height: 18px; margin: 0 0 0 20px; opacity: .4; }
.layer { width: 116px; height: 63px; margin: 0 0 0 9px; border: 1px solid #cdc7c2; border-radius: 6px; background: linear-gradient(#f8f7f6, #ecebe9); display: flex; align-items: center; padding-left: 24px; font-size: 21.5px; }
.layer svg { width: 12px; height: 7px; margin-left: 7px; fill: #2e3436; }
.msg { width: 657px; padding-left: 5px; line-height: 32px; display: flex; flex-direction: column; letter-spacing: -.21px; }
.msg .l2 { letter-spacing: -.18px; }
.vs2 { width: 1px; height: 62px; background: #dad8d6; }
.xy { display: grid; grid-template-columns: 40px 98px; width: 138px; margin: 0 0 0 9px; line-height: 32px; }
.xy span:nth-child(2n) { text-align: right; }
.lz { width: 37px; margin-left: 10px; }
.spin.live { background: #fff; color: #000; }
.spin.live b { width: 21px; color: #2e3436; }
.spin.live b:last-child { width: 22px; padding-right: 1px; }
.spin.sz { width: 153px; }
.spin.sz span { padding-left: 12px; }
.lr { width: 37px; margin-left: 11px; }
.spin.sr { width: 170px; }
.spin.sr span { padding-left: 27px; }
.grip { height: 7px; background: #0f0f04; border-top: 2px solid #000; border-bottom: 2px solid #000; display: flex; justify-content: space-between; }
.grip i { width: 20px; height: 3px; background: #7b7812; }
```
FILE: app.js
```js
const NS = 'http://www.w3.org/2000/svg';
const STEP = 69.27;

function add(parent, tag, attrs, text) {
  const el = document.createElementNS(NS, tag);
  for (const k in attrs) el.setAttribute(k, attrs[k]);
  if (text !== undefined) el.textContent = text;
  parent.appendChild(el);
}

// Horizontal ruler: zero sits 124px from the left edge of the canvas
const h = document.getElementById('hruler');
let d = 'M0 17.5H1567';
for (let i = -17; i <= 208; i++) {
  const x = Math.round(124 + i * STEP / 10) + 0.5;
  if (x < 0 || x > 1567) continue;
  const len = i % 10 === 0 ? 18 : i % 5 === 0 ? 9 : 5;
  d += `M${x} 17V${18 - len}`;
  if (i % 10 === 0) add(h, 'text', { x: x + 1.5, y: 9, textLength: String(i * 2.5).length * 6.1, lengthAdjust: 'spacingAndGlyphs' }, String(i * 2.5));
}
add(h, 'path', { d, stroke: '#2e3436', fill: 'none' });
add(h, 'path', { d: 'M1378 12.5h9l-4.500 5.5z', fill: '#2e3436' });

// Vertical ruler: zero sits above the top edge, digits are stacked
const v = document.getElementById('vruler');
d = 'M17.5 0V756';
for (let i = 4; i <= 110; i++) {
  const y = Math.round(-26.3 + i * STEP / 10) + 0.5;
  if (y < 0 || y > 756) continue;
  const len = i % 10 === 0 ? 18 : i % 5 === 0 ? 9 : 5;
  d += `M17 ${y}H${18 - len}`;
  if (i % 10 === 0 && i < 110) {
    [...String(i * 2.5)].forEach((c, n) => add(v, 'text', { x: 4.8, y: y + 8.8 + n * 8 }, c));
  }
}
add(v, 'path', { d, stroke: '#2e3436', fill: 'none' });
add(v, 'path', { d: 'M13 140.500v9l5-4.500z', fill: '#2e3436' });

const colors = `000000 1a1a1a 333333 4d4d4d 666666 808080 999999 b3b3b3 cccccc e6e6e6 ececec f2f2f2 f9f9f9 ffffff
800000 ff0000 808000 ffff00 008000 00ff00 008080 00ffff 000080 0000ff 800080 ff00ff
2b0000 550000 800000 aa0000 d40000 ff0000 ff2a2a ff5555 ff8080 ffaaaa ffd5d5
280b0b 501616 782121 a02c2c c83737 d35f5f de8787 e9afaf f4d7d7
241c1c 483737 6c5353 916f6f ac9393 c8b7b7 e3dbdb
2b1100 552200 803300 aa4400 d45500 ff6600 ff7f2a ff9955 ffb380 ffccaa ffe6d5
28170b 502d16 784421 a05a2c c87137 d38d5f deaa87 e9c6af f4e3d7
241f1c 483e37 6c5d53 917c6f ac9d93 c8beb7 e3dedb
2b2200 554400 806600 aa8800 d4aa00 ffcc00 ffd42a ffdd55 ffe680`.split(/\s+/);
const box = document.getElementById('swatches');
for (const c of colors) {
  const el = document.createElement('i');
  el.style.background = '#' + c;
  box.appendChild(el);
}
```
